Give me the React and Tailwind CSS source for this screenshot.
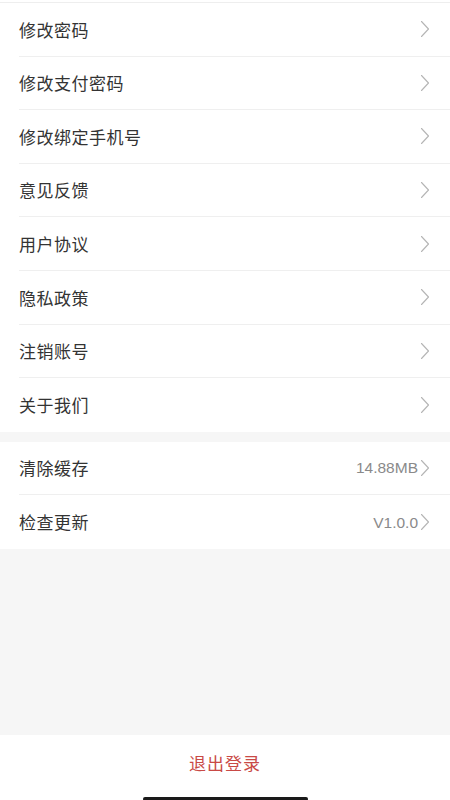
const groupOne = ['修改密码', '修改支付密码', '修改绑定手机号', '意见反馈', '用户协议', '隐私政策', '注销账号', '关于我们'];

const groupTwo = [
  { label: '清除缓存', value: '14.88MB' },
  { label: '检查更新', value: 'V1.0.0' },
];

function Chevron() {
  return (
    <svg className="w-[10px] h-[18px] shrink-0" viewBox="0 0 10 18" fill="none">
      <path d="M1.5 1.5 L8.5 9 L1.5 16.5" stroke="#b5b5b5" strokeWidth="1.1" strokeLinecap="round" strokeLinejoin="round" />
    </svg>
  );
}

function Row({ label, value, last }) {
  return (
    <div className="pl-[19px] bg-white">
      <div className={`h-[53.6px] pr-[20px] flex items-center justify-between ${last ? '' : 'border-b border-[#efefef]'}`}>
        <span className="text-[17px] text-[#333333] tracking-[0.5px]">{label}</span>
        <div className="flex items-center gap-[2px]">
          {value && (
            <span className="text-[15.5px] text-[#8a8a8a]" style={{ fontFamily: '"Liberation Sans", sans-serif' }}>
              {value}
            </span>
          )}
          <Chevron />
        </div>
      </div>
    </div>
  );
}

export default function App() {
  return (
    <div
      className="h-screen w-full flex flex-col bg-[#f6f6f6] overflow-hidden"
      style={{ fontFamily: '"Noto Sans CJK SC", "Noto Sans", sans-serif' }}
    >
      {/* top edge */}
      <div className="h-[3px] bg-white border-b border-[#eeeeee]" />

      <div className="bg-white">
        {groupOne.map((label, i) => (
          <Row key={label} label={label} last={i === groupOne.length - 1} />
        ))}
      </div>

      <div className="h-[10px] shrink-0" />

      <div className="bg-white">
        {groupTwo.map((item, i) => (
          <Row key={item.label} label={item.label} value={item.value} last={i === groupTwo.length - 1} />
        ))}
      </div>

      <div className="flex-1" />

      {/* logout */}
      <div className="h-[65px] bg-white flex flex-col items-center shrink-0">
        <button className="mt-[15px] text-[17px] text-[#c94a46] tracking-[1px]">退出登录</button>
        <div className="mt-auto w-[165px] h-[4px] rounded-full bg-[#1a1a1a] translate-y-[1px]" />
      </div>
    </div>
  );
}
